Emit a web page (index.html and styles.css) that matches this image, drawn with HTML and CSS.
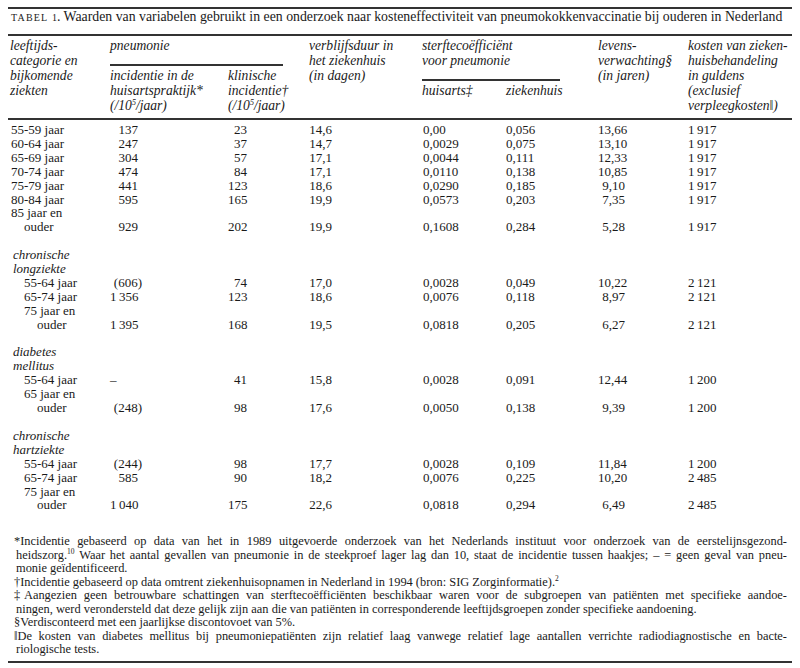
FILE: index.html
```html
<!DOCTYPE html>
<html lang="nl">
<head>
<meta charset="utf-8">
<title>Tabel 1</title>
<link rel="stylesheet" href="styles.css">
</head>
<body>
<div class="page">
  <p class="title"><span class="sc">Tabel</span> <span class="num">1</span>. Waarden van variabelen gebruikt in een onderzoek naar kosteneffectiviteit van pneumokokkenvaccinatie bij ouderen in Nederland</p>
  <table class="data">
    <colgroup>
      <col class="w1"><col class="w2"><col class="w3"><col class="w4"><col class="w5"><col class="w6"><col class="w7"><col class="w8">
    </colgroup>
    <thead>
      <tr>
        <th class="h1">leeftijds-<br>categorie en<br>bijkomende<br>ziekten</th>
        <th colspan="2">
          <div class="grp g-pn">pneumonie</div>
          <div class="sub">
            <span class="s-a">incidentie in de<br>huisartspraktijk*<br>(/10<sup>5</sup>/jaar)</span>
            <span class="s-b">klinische<br>incidentie†<br>(/10<sup>5</sup>/jaar)</span>
          </div>
        </th>
        <th>verblijfsduur in<br>het ziekenhuis<br>(in dagen)</th>
        <th colspan="2">
          <div class="grp g-st">sterftecoëfficiënt<br>voor pneumonie</div>
          <div class="sub">
            <span class="s-c">huisarts‡</span>
            <span class="s-d">ziekenhuis</span>
          </div>
        </th>
        <th>levens-<br>verwachting§<br>(in jaren)</th>
        <th>kosten van zieken-<br>huisbehandeling<br>in guldens<br>(exclusief<br>verpleegkosten‖)</th>
      </tr>
    </thead>
    <tbody>
      <tr class="first"><td class="lab">55-59 jaar</td><td class="n2">137</td><td class="n3">23</td><td class="n4">14,6</td><td class="n5">0,00</td><td class="n6">0,056</td><td class="n7">13,66</td><td class="n8">1&#8201;917</td></tr>
      <tr><td class="lab">60-64 jaar</td><td class="n2">247</td><td class="n3">37</td><td class="n4">14,7</td><td class="n5">0,0029</td><td class="n6">0,075</td><td class="n7">13,10</td><td class="n8">1&#8201;917</td></tr>
      <tr><td class="lab">65-69 jaar</td><td class="n2">304</td><td class="n3">57</td><td class="n4">17,1</td><td class="n5">0,0044</td><td class="n6">0,111</td><td class="n7">12,33</td><td class="n8">1&#8201;917</td></tr>
      <tr><td class="lab">70-74 jaar</td><td class="n2">474</td><td class="n3">84</td><td class="n4">17,1</td><td class="n5">0,0110</td><td class="n6">0,138</td><td class="n7">10,85</td><td class="n8">1&#8201;917</td></tr>
      <tr><td class="lab">75-79 jaar</td><td class="n2">441</td><td class="n3">123</td><td class="n4">18,6</td><td class="n5">0,0290</td><td class="n6">0,185</td><td class="n7">9,10</td><td class="n8">1&#8201;917</td></tr>
      <tr><td class="lab">80-84 jaar</td><td class="n2">595</td><td class="n3">165</td><td class="n4">19,9</td><td class="n5">0,0573</td><td class="n6">0,203</td><td class="n7">7,35</td><td class="n8">1&#8201;917</td></tr>
      <tr><td class="lab">85 jaar en<br>ouder</td><td class="n2">929</td><td class="n3">202</td><td class="n4">19,9</td><td class="n5">0,1608</td><td class="n6">0,284</td><td class="n7">5,28</td><td class="n8">1&#8201;917</td></tr>
      <tr class="gap"><td colspan="8"></td></tr>
      <tr><td class="grouplab" colspan="8">chronische<br>longziekte</td></tr>
      <tr><td class="lab sub-lab">55-64 jaar</td><td class="n2">(606<span class="rp">)</span></td><td class="n3">74</td><td class="n4">17,0</td><td class="n5">0,0028</td><td class="n6">0,049</td><td class="n7">10,22</td><td class="n8">2&#8201;121</td></tr>
      <tr><td class="lab sub-lab">65-74 jaar</td><td class="n2">1&#8201;356</td><td class="n3">123</td><td class="n4">18,6</td><td class="n5">0,0076</td><td class="n6">0,118</td><td class="n7">8,97</td><td class="n8">2&#8201;121</td></tr>
      <tr><td class="lab sub-lab">75 jaar en<br>ouder</td><td class="n2">1&#8201;395</td><td class="n3">168</td><td class="n4">19,5</td><td class="n5">0,0818</td><td class="n6">0,205</td><td class="n7">6,27</td><td class="n8">2&#8201;121</td></tr>
      <tr class="gap"><td colspan="8"></td></tr>
      <tr><td class="grouplab" colspan="8">diabetes<br>mellitus</td></tr>
      <tr><td class="lab sub-lab">55-64 jaar</td><td class="n2 dash">–</td><td class="n3">41</td><td class="n4">15,8</td><td class="n5">0,0028</td><td class="n6">0,091</td><td class="n7">12,44</td><td class="n8">1&#8201;200</td></tr>
      <tr><td class="lab sub-lab">65 jaar en<br>ouder</td><td class="n2">(248<span class="rp">)</span></td><td class="n3">98</td><td class="n4">17,6</td><td class="n5">0,0050</td><td class="n6">0,138</td><td class="n7">9,39</td><td class="n8">1&#8201;200</td></tr>
      <tr class="gap"><td colspan="8"></td></tr>
      <tr><td class="grouplab" colspan="8">chronische<br>hartziekte</td></tr>
      <tr><td class="lab sub-lab">55-64 jaar</td><td class="n2">(244<span class="rp">)</span></td><td class="n3">98</td><td class="n4">17,7</td><td class="n5">0,0028</td><td class="n6">0,109</td><td class="n7">11,84</td><td class="n8">1&#8201;200</td></tr>
      <tr><td class="lab sub-lab">65-74 jaar</td><td class="n2">585</td><td class="n3">90</td><td class="n4">18,2</td><td class="n5">0,0076</td><td class="n6">0,225</td><td class="n7">10,20</td><td class="n8">2&#8201;485</td></tr>
      <tr><td class="lab sub-lab">75 jaar en<br>ouder</td><td class="n2">1&#8201;040</td><td class="n3">175</td><td class="n4">22,6</td><td class="n5">0,0818</td><td class="n6">0,294</td><td class="n7">6,49</td><td class="n8">2&#8201;485</td></tr>
    </tbody>
  </table>
  <div class="notes">
    <div class="ln j">*Incidentie gebaseerd op data van het in 1989 uitgevoerde onderzoek van het Nederlands instituut voor onderzoek van de eerstelijnsgezond-</div>
    <div class="ln j cont">heidszorg.<sup>10</sup> Waar het aantal gevallen van pneumonie in de steekproef lager lag dan 10, staat de incidentie tussen haakjes; – = geen geval van pneu-</div>
    <div class="ln cont">monie geïdentificeerd.</div>
    <div class="ln">†Incidentie gebaseerd op data omtrent ziekenhuisopnamen in Nederland in 1994 (bron: SIG Zorginformatie).<sup>2</sup></div>
    <div class="ln j">‡Aangezien geen betrouwbare schattingen van sterftecoëfficiënten beschikbaar waren voor de subgroepen van patiënten met specifieke aandoe-</div>
    <div class="ln cont">ningen, werd verondersteld dat deze gelijk zijn aan die van patiënten in corresponderende leeftijdsgroepen zonder specifieke aandoening.</div>
    <div class="ln">§Verdisconteerd met een jaarlijkse discontovoet van 5%.</div>
    <div class="ln j">‖De kosten van diabetes mellitus bij pneumoniepatiënten zijn relatief laag vanwege relatief lage aantallen verrichte radiodiagnostische en bacte-</div>
    <div class="ln cont">riologische tests.</div>
  </div>
</div>
</body>
</html>
```

FILE: styles.css
```css
html, body {
  margin: 0;
  padding: 0;
  background: #ffffff;
}

body {
  font-family: "Liberation Serif", "Times New Roman", serif;
  color: #1a1a1a;
}

.page {
  width: 784px;
  padding: 7px 8px 0 8px;
}

.title {
  margin: 0;
  border-top: 2px solid #333;
  border-bottom: 2px solid #333;
  padding: 0 0 8px 3px;
  font-size: 13.8px;
  line-height: 16px;
  white-space: nowrap;
}

.sc {
  font-variant: small-caps;
  text-transform: lowercase;
  letter-spacing: 1.2px;
}

.num {
  font-size: 10px;
}

.data {
  width: 784px;
  table-layout: fixed;
  border-collapse: collapse;
  border-spacing: 0;
}

.w1 { width: 102px; }
.w2 { width: 118px; }
.w3 { width: 81px; }
.w4 { width: 113px; }
.w5 { width: 84px; }
.w6 { width: 92px; }
.w7 { width: 90px; }
.w8 { width: 104px; }

thead th {
  font-style: italic;
  font-weight: normal;
  font-size: 13.6px;
  line-height: 15px;
  text-align: left;
  vertical-align: top;
  padding: 2px 0 5px 0;
  border-bottom: 2px solid #333;
  white-space: nowrap;
}

thead th.h1 {
  padding-left: 2px;
}

.grp {
  padding-bottom: 11px;
  border-bottom: 2px solid #333;
}

.g-pn { width: 173px; }
.g-st { width: 138px; }

.sub {
  display: flex;
  margin-top: 2px;
}

.s-a { width: 118px; }
.s-b { width: 81px; }
.s-c { width: 84px; }
.s-d { width: 92px; }

thead sup {
  font-size: 8px;
  line-height: 0;
  vertical-align: 5px;
}

tbody td {
  font-size: 13px;
  line-height: 13.9px;
  padding: 0;
  vertical-align: bottom;
  white-space: nowrap;
}

tbody tr.first td {
  padding-top: 3px;
}

tr.gap td {
  height: 13.9px;
}

td.lab {
  padding-left: 16px;
  text-indent: -13px;
  white-space: normal;
}

td.lab.sub-lab {
  padding-left: 29px;
}

td.grouplab {
  font-style: italic;
  padding-left: 5px;
}

.n2 { text-align: right; padding-right: 90px; }
.n3 { text-align: right; padding-right: 62px; }
.n4 { text-align: right; padding-right: 90px; }
.n5 { text-align: left; padding-left: 1px; }
.n6 { text-align: left; }
.n7 { text-align: right; padding-right: 63px; }
.n8 { text-align: right; padding-right: 77px; }

td.n2.dash {
  text-align: left;
  padding-right: 0;
}

.rp {
  margin-right: -4px;
}

.notes {
  margin-top: 23px;
  padding: 0 5px 5px 6px;
  border-bottom: 2px solid #333;
  font-size: 12.4px;
  line-height: 13.45px;
}

.ln {
  white-space: nowrap;
}

.ln.j {
  text-align: justify;
  text-align-last: justify;
  white-space: normal;
}

.ln.cont {
  padding-left: 2px;
}

.notes sup {
  font-size: 7.5px;
  line-height: 0;
  vertical-align: 5px;
}
```
